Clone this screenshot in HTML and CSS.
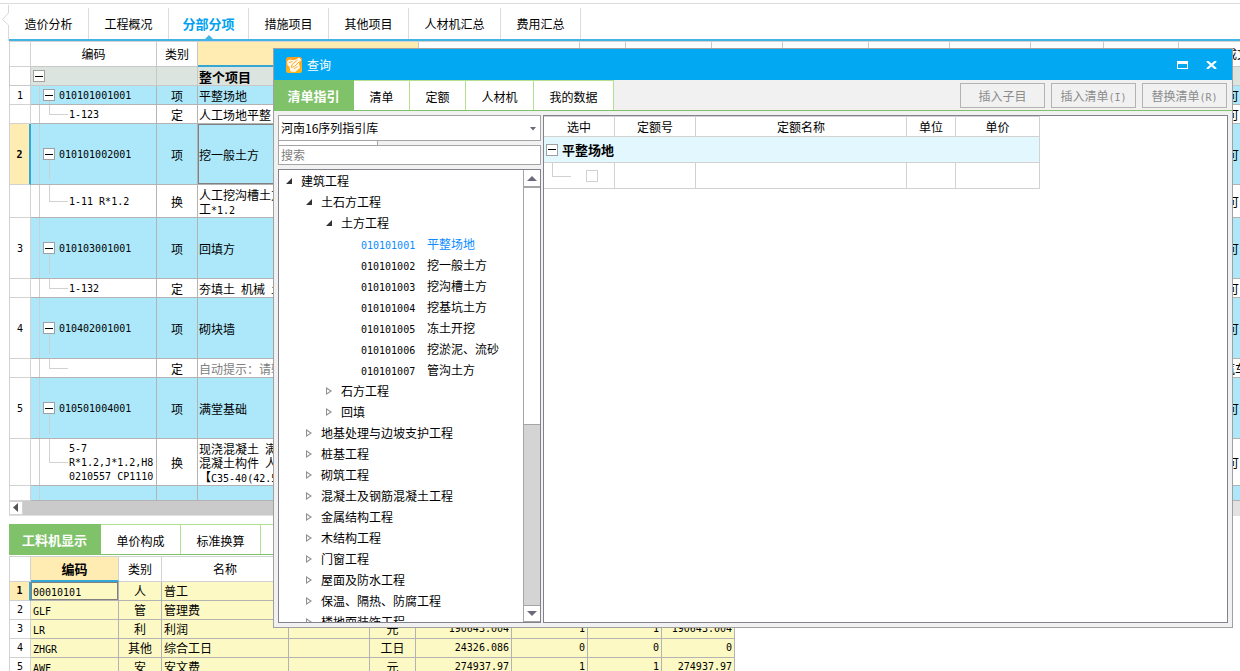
FILE: index.html
```html
<!DOCTYPE html>
<html lang="zh-CN">
<head>
<meta charset="utf-8">
<title>分部分项</title>
<link rel="stylesheet" href="styles.css">
</head>
<body>
<main class="app">
  <svg class="notch" width="9" height="36" viewBox="0 0 9 36"><path d="M8.5 0V8L2.500 14.500L8.500 20V36" fill="none" stroke="#d8d8d8"/></svg>
  <nav class="main-tabs">
    <button>造价分析</button>
    <button>工程概况</button>
    <button class="active">分部分项</button>
    <button>措施项目</button>
    <button>其他项目</button>
    <button class="wide">人材机汇总</button>
    <button>费用汇总</button>
  </nav>

  <table class="grid bill">
    <colgroup>
      <col class="c22"><col class="c126"><col class="c41"><col class="c221"><col class="c161"><col class="c46"><col class="c86"><col class="c71"><col class="c86"><col class="c81"><col class="c81"><col class="c73"><col class="c75"><col>
    </colgroup>
    <thead>
      <tr><th></th><th>编码</th><th>类别</th><th class="picked"></th><th></th><th></th><th></th><th></th><th></th><th></th><th></th><th></th><th></th><th class="edge">成文</th></tr>
    </thead>
    <tbody>
      <tr class="root"><td></td><td class="code"><span class="box"></span></td><td></td><td class="name strong">整个项目</td><td colspan="9"></td><td></td></tr>
      <tr class="item"><td class="n">1</td><td class="code"><span class="box"></span><span class="m">010101001001</span></td><td>项</td><td class="name">平整场地</td><td colspan="9"></td><td class="edge">可</td></tr>
      <tr class="sub"><td></td><td class="code"><span class="m">1-123</span></td><td>定</td><td class="name">人工场地平整</td><td colspan="9"></td><td class="edge">可</td></tr>
      <tr class="item tall current"><td class="n">2</td><td class="code"><span class="box"></span><span class="m">010101002001</span></td><td>项</td><td class="name focus">挖一般土方</td><td colspan="9"></td><td class="edge">可</td></tr>
      <tr class="sub two"><td></td><td class="code"><span class="m">1-11 R*1.2</span></td><td>换</td><td class="name">人工挖沟槽土方<br>工<span class="m">*1.2</span></td><td colspan="9"></td><td class="edge">可</td></tr>
      <tr class="item tall"><td class="n">3</td><td class="code"><span class="box"></span><span class="m">010103001001</span></td><td>项</td><td class="name">回填方</td><td colspan="9"></td><td class="edge">可</td></tr>
      <tr class="sub"><td></td><td class="code"><span class="m">1-132</span></td><td>定</td><td class="name">夯填土<span class="m"> </span>机械<span class="m"> </span>土</td><td colspan="9"></td><td class="edge">可</td></tr>
      <tr class="item tall"><td class="n">4</td><td class="code"><span class="box"></span><span class="m">010402001001</span></td><td>项</td><td class="name">砌块墙</td><td colspan="9"></td><td class="edge">可</td></tr>
      <tr class="sub"><td></td><td class="code"></td><td>定</td><td class="name hint">自动提示：请输</td><td colspan="9"></td><td class="edge early">汽车</td></tr>
      <tr class="item tall"><td class="n">5</td><td class="code"><span class="box"></span><span class="m">010501004001</span></td><td>项</td><td class="name">满堂基础</td><td colspan="9"></td><td class="edge">可</td></tr>
      <tr class="sub three"><td></td><td class="code"><span class="m">5-7<br>R*1.2,J*1.2,H8<br>0210557 CP1110</span></td><td>换</td><td class="name">现浇混凝土<span class="m"> </span>满<br>混凝土构件<span class="m"> </span>人<br>【<span class="m">C35-40(42.5</span></td><td colspan="9"></td><td class="edge">可</td></tr>
      <tr class="item cut"><td></td><td class="code"></td><td></td><td></td><td colspan="9"></td><td></td></tr>
    </tbody>
  </table>
  <div class="hscroll"><button aria-label="向左滚动"><svg width="6" height="10" viewBox="0 0 6 10"><path d="M5 0V9L0 4.500Z" fill="#555"/></svg></button></div>

  <nav class="green-tabs lower">
    <button class="active">工料机显示</button>
    <button>单价构成</button>
    <button>标准换算</button>
  </nav>
  <table class="grid res">
    <colgroup>
      <col class="c22"><col class="c88"><col class="c43"><col class="c127"><col class="c81"><col class="c46"><col class="c96"><col class="c76"><col class="c74"><col class="c73">
    </colgroup>
    <thead>
      <tr><th></th><th class="picked strong">编码</th><th>类别</th><th>名称</th><th></th><th></th><th></th><th></th><th></th><th></th></tr>
    </thead>
    <tbody>
      <tr class="current"><td class="n">1</td><td class="left focus"><span class="m">00010101</span></td><td>人</td><td class="left">普工</td><td></td><td></td><td></td><td></td><td></td><td></td></tr>
      <tr><td class="n">2</td><td class="left"><span class="m">GLF</span></td><td>管</td><td class="left">管理费</td><td></td><td></td><td></td><td></td><td></td><td></td></tr>
      <tr><td class="n">3</td><td class="left"><span class="m">LR</span></td><td>利</td><td class="left">利润</td><td></td><td>元</td><td class="num">190643.004</td><td class="num">1</td><td class="num">1</td><td class="num">190643.004</td></tr>
      <tr><td class="n">4</td><td class="left"><span class="m">ZHGR</span></td><td>其他</td><td class="left">综合工日</td><td></td><td>工日</td><td class="num">24326.086</td><td class="num">0</td><td class="num">0</td><td class="num">0</td></tr>
      <tr><td class="n">5</td><td class="left"><span class="m">AWF</span></td><td>安</td><td class="left">安文费</td><td></td><td>元</td><td class="num">274937.97</td><td class="num">1</td><td class="num">1</td><td class="num">274937.97</td></tr>
    </tbody>
  </table>
</main>

<section class="dialog" role="dialog" aria-labelledby="dlg-title">
  <header class="titlebar">
    <svg width="16" height="16" viewBox="0 0 16 16"><defs><linearGradient id="g" x2="0" y2="1"><stop stop-color="#ff9c1c"/><stop offset="1" stop-color="#ffb51f"/></linearGradient></defs><rect width="16" height="16" rx="2.500" fill="url(#g)"/><path d="M1 4.500L3 2.500L7 3L10 2.500L13 0.500L15.500 3L13 6L14 11L9 15L4.500 14.500L3.500 10L1.500 8Z" fill="#fff8e6"/><path d="M11.500 3L6 7.500L5.500 10.500L8.500 9.500L13.500 4.500M3 5.500L6.500 4.500M8 12L11.500 9.500" fill="none" stroke="#ffab35" stroke-width="1"/></svg>
    <h1 id="dlg-title">查询</h1>
    <button aria-label="最大化"><svg width="11" height="8" viewBox="0 0 11 8"><path d="M0 0H11V8H0ZM1 3V7H10V3Z" fill="#fff" fill-rule="evenodd"/></svg></button>
    <button aria-label="关闭"><svg width="11" height="8" viewBox="0 0 11 8"><path d="M1 0L10 8M10 0L1 8" stroke="#fff" stroke-width="2.200"/></svg></button>
  </header>
  <div class="toolbar">
    <nav class="green-tabs">
      <button class="active">清单指引</button>
      <button class="t56">清单</button>
      <button class="t56">定额</button>
      <button class="t68">人材机</button>
      <button class="t80">我的数据</button>
    </nav>
    <div class="actions">
      <button disabled>插入子目</button>
      <button disabled>插入清单<span class="m">(I)</span></button>
      <button disabled>替换清单<span class="m">(R)</span></button>
    </div>
  </div>
  <div class="body">
    <div class="side">
      <div class="combo">
        <select aria-label="指引库"><option>河南16序列指引库</option></select>
        <svg width="6" height="4" viewBox="0 0 6 4"><path d="M0 0H6L3 3.500Z" fill="#6a6a78"/></svg>
      </div>
      <div class="strip"></div>
      <input class="search" type="text" placeholder="搜索" aria-label="搜索">
      <div class="tree-wrap">
        <ul class="tree">
          <li class="l0 open">建筑工程</li>
          <li class="l1 open">土石方工程</li>
          <li class="l2 open">土方工程</li>
          <li class="leaf sel"><span class="m">010101001</span>平整场地</li>
          <li class="leaf"><span class="m">010101002</span>挖一般土方</li>
          <li class="leaf"><span class="m">010101003</span>挖沟槽土方</li>
          <li class="leaf"><span class="m">010101004</span>挖基坑土方</li>
          <li class="leaf"><span class="m">010101005</span>冻土开挖</li>
          <li class="leaf"><span class="m">010101006</span>挖淤泥、流砂</li>
          <li class="leaf"><span class="m">010101007</span>管沟土方</li>
          <li class="l2 shut">石方工程</li>
          <li class="l2 shut">回填</li>
          <li class="l1 shut">地基处理与边坡支护工程</li>
          <li class="l1 shut">桩基工程</li>
          <li class="l1 shut">砌筑工程</li>
          <li class="l1 shut">混凝土及钢筋混凝土工程</li>
          <li class="l1 shut">金属结构工程</li>
          <li class="l1 shut">木结构工程</li>
          <li class="l1 shut">门窗工程</li>
          <li class="l1 shut">屋面及防水工程</li>
          <li class="l1 shut">保温、隔热、防腐工程</li>
          <li class="l1 shut">楼地面装饰工程</li>
        </ul>
        <div class="vscroll">
          <button aria-label="向上滚动"><svg width="10" height="5" viewBox="0 0 10 5"><path d="M0 5L5 0L10 5Z" fill="#6a6a78"/></svg></button>
          <div class="thumb"></div>
          <div class="track"></div>
          <button aria-label="向下滚动"><svg width="10" height="5" viewBox="0 0 10 5"><path d="M0 0L5 5L10 0Z" fill="#6a6a78"/></svg></button>
        </div>
      </div>
    </div>
    <div class="result">
      <table class="grid quota">
        <colgroup><col class="c71"><col class="c81"><col class="c211"><col class="c49"><col class="c84"></colgroup>
        <thead><tr><th>选中</th><th>定额号</th><th>定额名称</th><th>单位</th><th>单价</th></tr></thead>
        <tbody>
          <tr class="group"><td colspan="5"><span class="box"></span>平整场地</td></tr>
          <tr><td class="pick"><input type="checkbox" aria-label="选中"></td><td></td><td></td><td></td><td></td></tr>
        </tbody>
      </table>
    </div>
  </div>
</section>
</body>
</html>
```

FILE: styles.css
```css
* { box-sizing: border-box; }
html, body { height: 100%; }
body {
  margin: 0;
  position: relative;
  overflow: hidden;
  background: #fff;
  color: #000;
  font: 12px/14px "Noto Sans CJK SC", sans-serif;
}
button, select, input { font: inherit; color: inherit; border-radius: 0; }
button { background: none; border: 0; padding: 0; }
svg { display: block; }
.m { font-family: "DejaVu Sans Mono", monospace; font-size: 10px; line-height: 10px; white-space: pre; }
.strong { font-weight: 700; font-size: 13px; }

/* main window */
.app {
  position: relative;
  height: 100%;
  overflow: hidden;
  padding-left: 9px;
}
.app::before { content: ""; display: block; height: 1px; margin: 3px 0 4px -9px; background: #dcdcdc; }
.notch { position: absolute; left: 0; top: 5px; }
.main-tabs { display: flex; border-bottom: 2px solid #41b4e6; }
.main-tabs button {
  position: relative;
  width: 80px;
  height: 31px;
  border-right: 1px solid #dcdcdc;
}
.main-tabs .wide { width: 92px; }
.main-tabs .active { color: #00a2f0; font-weight: 700; font-size: 13px; }
.main-tabs .active::after {
  content: "";
  position: absolute;
  left: 36px;
  bottom: 0;
  border: 4px solid transparent;
  border-top: 0;
  border-bottom-color: #41b4e6;
}

/* grids */
.grid { table-layout: fixed; border-collapse: separate; border-spacing: 0; border-top: 1px solid #d2d2d2; }
.grid th, .grid td {
  padding: 0;
  border: 0 solid #b3b3b3;
  border-width: 0 1px 1px 0;
  text-align: center;
  white-space: nowrap;
  overflow: hidden;
}
.grid th { font-weight: 400; border-color: #d2d2d2; }
.grid th.strong { font-weight: 700; }
.grid thead tr { height: 25px; }
.grid tbody tr { height: 19px; }
.grid tr > :first-child { border-color: #d2d2d2; }
.bill tr > :first-child, .res tr > :first-child { border-left-width: 1px; }
.grid .n { font-family: "DejaVu Sans Mono", monospace; font-size: 10px; }
.grid .picked { background: #ffecb3; border-bottom: 2px solid #35a7d5; }
.grid .current .n { background: #ffecb3; border-right: 2px solid #35a7d5; font-weight: 700; }
.grid .focus { box-shadow: inset 0 0 0 1px #808080; }
.bill { width: 100%; }
.bill td { padding-top: 2px; }
.bill th, .bill .root td { border-color: #c8c8c8; }
.bill .name { text-align: left; padding-left: 1px; }
.bill tr > :last-child { border-right-width: 0; }
.bill .edge { text-align: left; padding-left: 48px; }
.bill th.edge { padding-left: 46px; }
.bill .early { padding-left: 44px; }
.bill .hint { color: #808080; }
.bill .root td:not(:first-child) { background: #dce4df; }
.bill .item td:not(:first-child) { background-color: #ade8fa; }
.bill tbody .tall { height: 61px; }
.bill tbody .two { height: 33px; }
.bill tbody .three { height: 47px; }
.bill tbody .cut { height: 15px; }
.bill .code { position: relative; text-align: left; padding-left: 28px; }
.bill .code .m { display: block; line-height: 14px; }
.bill tr:not(.root) .code { background-image: linear-gradient(90deg, transparent 8px, #c8d0d2 8px, #c8d0d2 9px, transparent 9px); }
.bill .sub .code { padding-left: 38px; }
.bill .sub .code::before {
  content: "";
  position: absolute;
  left: 18px;
  top: 0;
  width: 18px;
  height: 50%;
  border: solid #d2d2d2;
  border-width: 0 0 1px 1px;
}
.bill .item .box::after {
  content: "";
  position: absolute;
  left: 5px;
  top: 11px;
  height: 20px;
  border-left: 1px solid #c8d0d2;
}
.box {
  position: absolute;
  left: 12px;
  top: 50%;
  width: 12px;
  height: 12px;
  margin-top: -6px;
  border: 1px solid #a0a0a0;
  background: linear-gradient(#000, #000) center / 8px 1px no-repeat #fff;
}
.root .box { left: 2px; }

.c22 { width: 22px; } .c41 { width: 41px; } .c43 { width: 43px; } .c46 { width: 46px; }
.c49 { width: 49px; } .c71 { width: 71px; } .c73 { width: 73px; } .c74 { width: 74px; }
.c75 { width: 75px; } .c76 { width: 76px; } .c81 { width: 81px; } .c84 { width: 84px; }
.c86 { width: 86px; } .c88 { width: 88px; } .c96 { width: 96px; } .c126 { width: 126px; }
.c127 { width: 127px; } .c161 { width: 161px; } .c211 { width: 211px; } .c221 { width: 221px; }

.hscroll { display: flex; height: 15px; background: linear-gradient(90deg, #cacaca calc(100% - 40px), #e2e2e2 0); border-bottom: 1px solid #e0e0e0; }
.hscroll button { display: grid; place-items: center; width: 14px; background: #fff; border: 1px solid #d2d2d2; }

/* green tab strips */
.green-tabs { display: flex; }
.green-tabs button {
  height: 30px;
  width: 80px;
  padding-top: 2px;
  background: #fff;
  border-top: 1px solid #b5e08f;
  border-right: 1px solid #b5e08f;
}
.green-tabs button.active {
  padding-top: 0;
  background: #80c269;
  border-color: #80c269;
  color: #fff;
  font-weight: 700;
  font-size: 13px;
}
.green-tabs .t56 { width: 56px; }
.green-tabs .t68 { width: 68px; }
.green-tabs .t80 { width: 80px; }
.lower { margin: 8px 12px 0 0; background: linear-gradient(#b5e08f, #b5e08f) top / 100% 1px no-repeat; border-bottom: 1px solid #80c269; }
.lower button.active { width: 92px; }
.res { width: 726px; margin-top: 1px; }
.res tbody td:not(:first-child) { background: #fdf9c4; }
.res .left { text-align: left; padding-left: 2px; }
.res .num { text-align: right; padding-right: 2px; font-family: "DejaVu Sans Mono", monospace; font-size: 10px; }

/* query dialog */
.dialog {
  position: absolute;
  left: 273px;
  right: 7px;
  top: 48px;
  bottom: 43px;
  display: flex;
  flex-direction: column;
  border: 1px solid #a0a0a0;
  background: #f1f1f1;
}
.titlebar { display: flex; align-items: center; gap: 5px; height: 31px; padding: 0 15px 0 12px; background: #02a9f2; color: #fff; }
.titlebar h1 { flex: 1; margin: 0; font-size: 12px; font-weight: 400; }
.titlebar button + button { margin-left: 13px; }
.toolbar { display: flex; justify-content: space-between; border-bottom: 1px solid #80c269; }
.actions { display: flex; align-items: center; gap: 6px; padding-right: 5px; }
.actions button { width: 85px; height: 25px; padding-top: 1px; border: 1px solid #b3b3b3; color: #8c8c8c; }
.body { flex: 1; display: flex; gap: 2px; min-height: 0; padding: 4px; }
.side { display: flex; flex-direction: column; width: 263px; }
.combo { position: relative; }
.combo select {
  display: block;
  width: 100%;
  height: 26px;
  padding: 0 2px;
  appearance: none;
  background: #fff;
  border: 1px solid #a5a5a5;
}
.combo svg { position: absolute; right: 5px; top: 12px; }
.strip { width: 100px; height: 4px; background: #fff; border: solid #a5a5a5; border-width: 0 1px 0 1px; }
.search { width: 100%; height: 20px; padding: 0 2px 2px; border: 1px solid #a5a5a5; background: #fff; }
.search::placeholder { color: #808080; opacity: 1; }
.tree-wrap { flex: 1; display: flex; min-height: 0; margin-top: 4px; overflow: hidden; border: 1px solid #82828c; background: #fff; }
.tree { flex: 1; margin: 0; padding: 0; list-style: none; overflow: hidden; }
.tree li { position: relative; height: 21px; line-height: 21px; white-space: nowrap; }
.tree .l0 { padding-left: 22px; }
.tree .l1 { padding-left: 42px; }
.tree .l2 { padding-left: 62px; }
.tree .leaf { padding-left: 82px; }
.leaf .m { display: inline-block; width: 66px; }
.tree .sel { color: #0a8cff; }
.tree .open::before {
  content: "";
  display: inline-block;
  width: 6px;
  height: 6px;
  margin: 0 9px 2px -15px;
  background: #333;
  clip-path: polygon(100% 0, 100% 100%, 0 100%);
}
.tree .shut::before {
  content: "";
  display: inline-block;
  width: 6px;
  height: 8px;
  margin: 0 9px 1px -15px;
  background: #909090;
  clip-path: polygon(0 0, 100% 50%, 0 100%, 0 0, 1px 2px, 1px 6px, 4px 4px, 1px 2px);
}
.vscroll { display: flex; flex-direction: column; width: 17px; border-left: 1px solid #a5a5a5; }
.vscroll button { display: grid; place-items: center; height: 17px; border-bottom: 1px solid #a5a5a5; }
.vscroll .track + button { border-top: 1px solid #a5a5a5; }
.thumb { flex: 238; border: solid #a5a5a5; border-width: 1px 0; background: #fff; }
.track { flex: 181; background: #d4d4d4; }
.result { flex: 1; min-width: 0; overflow: hidden; border: 1px solid #82828c; background: #fff; }
.quota { width: 496px; }
.quota thead tr { height: 20px; }
.quota th, .quota td { border-color: #d2d2d2; }
.quota tbody tr { height: 26px; }
.quota .group td { position: relative; background: #e2f7fe; padding-left: 18px; text-align: left; font-weight: 700; font-size: 13px; }
.quota .box { left: 2px; }
.quota .pick { position: relative; padding: 0 16px 0 0; text-align: right; }
.quota .pick::before { content: ""; position: absolute; left: 8px; top: 0; width: 18px; height: 13px; border: solid #d2d2d2; border-width: 0 0 1px 1px; }
.pick input { display: block; appearance: none; width: 12px; height: 12px; margin: 0 0 0 auto; border: 1px solid #d2d2d2; background: #fff; }
```
